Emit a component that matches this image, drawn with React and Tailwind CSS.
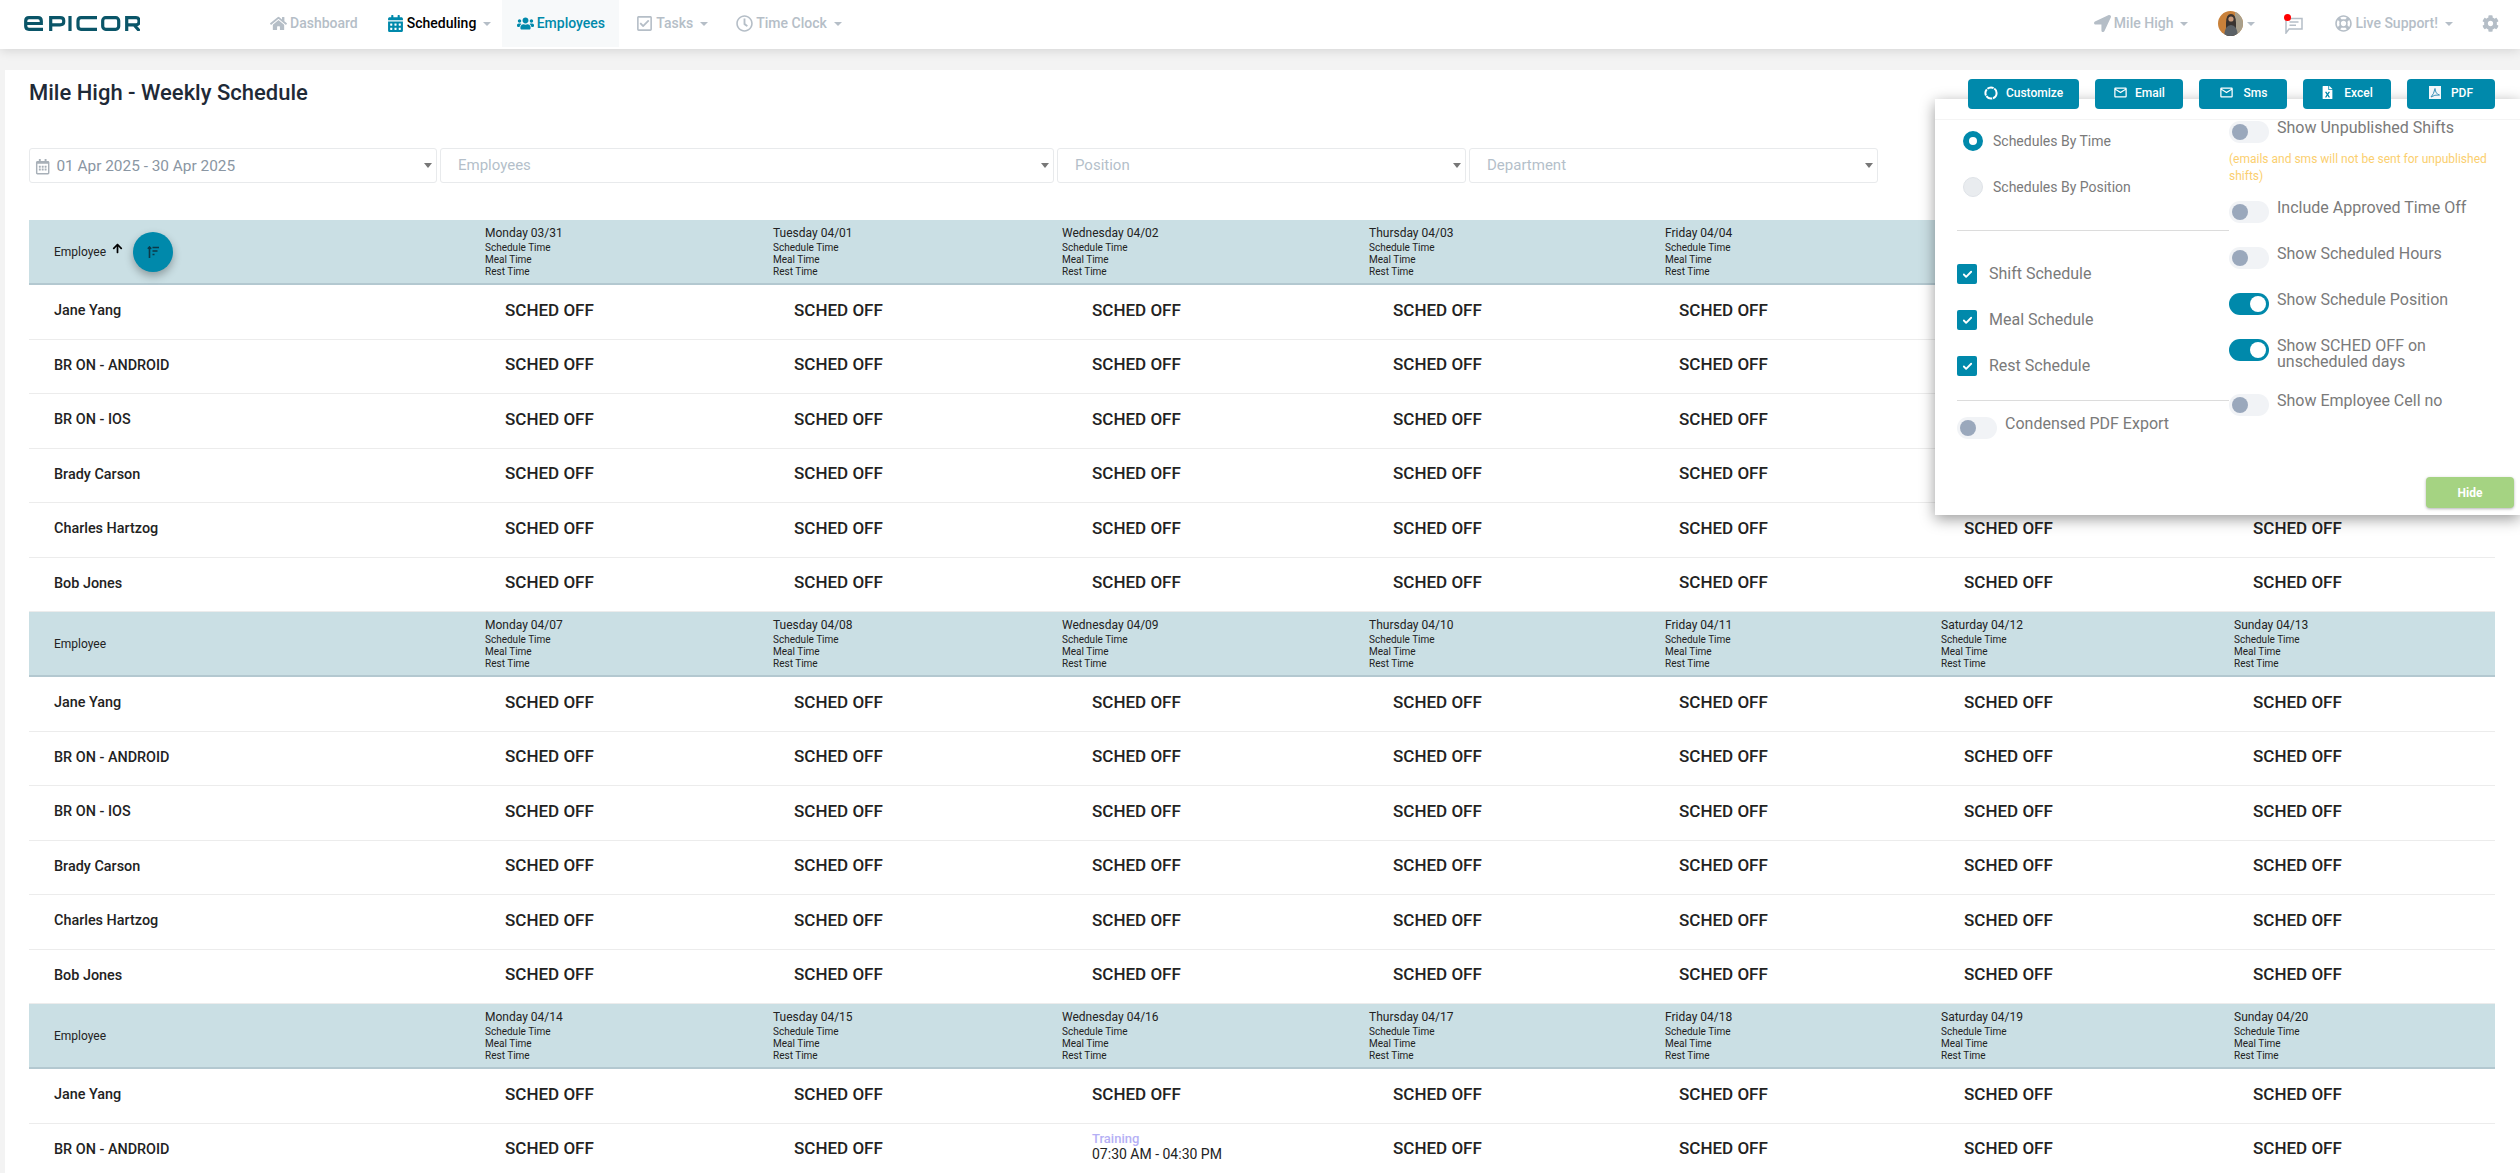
import { Check } from 'lucide-react';
import {
  FaArrowUp,
  FaCalendarAlt,
  FaCog,
  FaFileExcel,
  FaHome,
  FaLocationArrow,
  FaRegCalendarAlt,
  FaRegCheckSquare,
  FaRegClock,
  FaRegLifeRing,
  FaUsers,
} from 'react-icons/fa';
import { MdOutlineMail } from 'react-icons/md';

const employees = ['Jane Yang', 'BR ON - ANDROID', 'BR ON - IOS', 'Brady Carson', 'Charles Hartzog', 'Bob Jones'];

const weeks = [
  ['Monday 03/31', 'Tuesday 04/01', 'Wednesday 04/02', 'Thursday 04/03', 'Friday 04/04', 'Saturday 04/05', 'Sunday 04/06'],
  ['Monday 04/07', 'Tuesday 04/08', 'Wednesday 04/09', 'Thursday 04/10', 'Friday 04/11', 'Saturday 04/12', 'Sunday 04/13'],
  ['Monday 04/14', 'Tuesday 04/15', 'Wednesday 04/16', 'Thursday 04/17', 'Friday 04/18', 'Saturday 04/19', 'Sunday 04/20'],
];

const cellPad = ['pl-[20px]', 'pl-[21px]', 'pl-[30px]', 'pl-[24px]', 'pl-[14px]', 'pl-[23px]', 'pl-[19px]'];
const columns = 'grid grid-cols-[456px_288px_289px_307px_296px_276px_293px_1fr]';

const Caret = () => (
  <span className="ml-[4px] inline-block h-0 w-0 border-x-[4px] border-t-[4px] border-x-transparent border-t-[#b5bec7]" />
);

const Logo = () => (
  <svg width="116" height="15" viewBox="0 0 116 15" fill="none" stroke="#0a5568" strokeWidth="3.2" className="ml-[24px] shrink-0">
    <path d="M1.7 7.5H17.3V5Q17.3 1.7 14 1.7H5Q1.7 1.7 1.7 5V10Q1.7 13.3 5 13.3H19" />
    <path d="M26.7 15V1.7H36Q39.7 1.7 39.7 4.5V6Q39.7 8.8 36 8.8H26.7" />
    <path d="M46 0V15" />
    <path d="M73 1.7H57Q54 1.7 54 5V10Q54 13.3 57 13.3H73" />
    <rect x="78.7" y="1.7" width="16" height="11.6" rx="3" />
    <path d="M102.7 15V1.7H112Q115 1.7 115 4.5V6Q115 8.8 112 8.8H102.7M110 8.8L115.5 15" />
  </svg>
);

const Avatar = () => (
  <svg width="25" height="25" viewBox="0 0 25 25" className="shrink-0 rounded-full">
    <rect width="25" height="25" fill="#c9813a" />
    <rect x="17" width="8" height="25" fill="#a9a08c" />
    <path d="M8 25V12Q8 3 13 3T18 12V25Z" fill="#3a3430" />
    <path d="M6 25Q7 14 13 14T20 25Z" fill="#5b6166" />
    <circle cx="13" cy="8" r="2.6" fill="#c99a7a" />
  </svg>
);

const ChatIcon = () => (
  <svg width="18" height="17" viewBox="0 0 18 17" fill="none" stroke="#b5bec7" strokeWidth="1.5">
    <path d="M1 1.5H17V12H4L1 16Z" />
    <path d="M4.5 5H13.5M4.5 8.2H11" />
  </svg>
);

const CustomizeIcon = () => (
  <svg width="14" height="14" viewBox="0 0 14 14" fill="none" stroke="#fff" strokeWidth="2">
    <circle cx="7" cy="7" r="5.6" strokeDasharray="6.5 0.8" />
  </svg>
);

const PdfIcon = () => (
  <svg width="12" height="13" viewBox="0 0 12 13">
    <rect width="12" height="13" fill="#f4f7fa" />
    <path d="M2 11Q5 8 6 2.5Q6.5 8 10.5 9Q5.5 8.5 2 11Z" fill="none" stroke="#3c91b8" strokeWidth="1" />
  </svg>
);

const SortIcon = () => (
  <svg width="12" height="12" viewBox="0 0 12 12" fill="none" stroke="#0d3947" strokeWidth="1.6">
    <path d="M2.5 12V1M0.8 2.8L2.5 1L4.2 2.8" />
    <path d="M5.5 1.5H12M5.5 5H10.5M5.5 8.5H7.5" />
  </svg>
);

const NavItem = ({ icon: Icon, label, caret, color = 'text-[#b5bec7]', className = '', iconClass = '' }) => (
  <div className={`flex items-center gap-[3px] text-[14px] font-medium ${color} ${className}`}>
    <Icon className={`text-[17px] ${iconClass}`} />
    <span>{label}</span>
    {caret && <Caret />}
  </div>
);

const ActionButton = ({ icon, label, className = 'w-[88px] gap-[10px]' }) => (
  <button className={`flex h-[30px] items-center justify-center rounded-[4px] bg-[#0089ab] pb-[3px] text-[12px] font-medium text-white ${className}`}>
    {icon}
    <span>{label}</span>
  </button>
);

const FilterBox = ({ label, className, icon, value }) => (
  <div className={`flex h-[35px] items-center justify-between rounded-[3px] border border-[#e8eaec] pr-[4px] ${className}`}>
    {icon ? (
      <div className="flex items-center gap-[6px] pl-[5px] pt-[3px] text-[15.4px] text-[#8a96a3]">
        <FaRegCalendarAlt className="text-[#a8b0b8]" />
        <span>{value}</span>
      </div>
    ) : (
      <span className="pb-[1px] pl-[17px] text-[15px] text-[#b4bfca]">{label}</span>
    )}
    <span className="h-0 w-0 border-x-[4px] border-t-[5px] border-x-transparent border-t-[#777]" />
  </div>
);

const WeekHeader = ({ days, first }) => (
  <div className={`${columns} h-[65px] border-b-2 border-[#b3c8d0] bg-[#cadfe4] text-[#222]`}>
    <div className="flex items-center pl-[25px] text-[12px]">
      <span>Employee</span>
      {first && (
        <>
          <FaArrowUp className="mb-[6px] ml-[6px] text-[11px] text-black" />
          <div className="ml-[10px] flex h-[40px] w-[40px] items-center justify-center rounded-full bg-[#0089ab] shadow-[0_4px_8px_rgba(0,0,0,0.3)]">
            <SortIcon />
          </div>
        </>
      )}
    </div>
    {days.map((day) => (
      <div key={day} className="pt-[6px] text-[10px] leading-[12px]">
        <div className="mb-[1px] text-[12px] leading-[15px]">{day}</div>
        <div>Schedule Time</div>
        <div>Meal Time</div>
        <div>Rest Time</div>
      </div>
    ))}
  </div>
);

const EmployeeRow = ({ name, training }) => (
  <div className={`${columns} h-[54.5px] items-center border-b border-[#ececec] pb-[3px] text-[#222]`}>
    <div className="pl-[25px] pt-[2px] text-[14.4px] font-medium">{name}</div>
    {cellPad.map((pad, i) => (
      <div key={pad} className={pad}>
        {training && i === 2 ? (
          <div className="pb-[5px]">
            <div className="text-[13px] font-medium leading-[15px] text-[#b5b0f5]">Training</div>
            <div className="text-[14px] leading-[16px]">07:30 AM - 04:30 PM</div>
          </div>
        ) : (
          <span className="text-[17px] font-medium">SCHED OFF</span>
        )}
      </div>
    ))}
  </div>
);

const Toggle = ({ on }) => (
  <div className={`flex h-[22px] w-[40px] shrink-0 items-center rounded-full px-[3px] ${on ? 'justify-end bg-[#0089ab]' : 'bg-[#f1f3f6]'}`}>
    <div className={`h-[16px] w-[16px] rounded-full ${on ? 'bg-white' : 'bg-[#9aa8bc]'}`} />
  </div>
);

const ToggleRow = ({ label, on, className = 'mt-[24px]' }) => (
  <div className={`flex items-start gap-[8px] ${className}`}>
    <Toggle on={on} />
    <span className="-mt-[1px] w-[190px] text-[16px] leading-[16px] text-[#7a7a7a]">{label}</span>
  </div>
);

const CheckRow = ({ label, className = 'mt-[26px]' }) => (
  <div className={`flex items-center gap-[12px] text-[16px] leading-[20px] text-[#7a7a7a] ${className}`}>
    <div className="flex h-[20px] w-[20px] items-center justify-center rounded-[2px] bg-[#0089ab]">
      <Check size={11} strokeWidth={4} className="text-white" />
    </div>
    <span>{label}</span>
  </div>
);

const SettingsPanel = () => (
  <div className="absolute left-[1930px] top-[29px] flex h-[416px] w-[585px] flex-col bg-white shadow-[0_4px_14px_rgba(0,0,0,0.4)]">
    <div className="h-[21px] shrink-0 border-b border-[#f4f4f4]" />
    <div className="flex pl-[22px]">
      <div className="w-[272px]">
        <div className="ml-[6px] mt-[11px] flex items-center gap-[10px] text-[14px] leading-[20px] text-[#7a7a7a]">
          <div className="h-[20px] w-[20px] rounded-full border-[6px] border-[#0089ab] bg-white" />
          <span>Schedules By Time</span>
        </div>
        <div className="ml-[6px] mt-[26px] flex items-center gap-[10px] text-[14px] leading-[20px] text-[#7a7a7a]">
          <div className="h-[20px] w-[20px] rounded-full border border-[#dfe3e8] bg-[#e9ecef]" />
          <span>Schedules By Position</span>
        </div>
        <div className="mt-[33px] h-px bg-[#dcdcdc]" />
        <CheckRow label="Shift Schedule" className="mt-[33px]" />
        <CheckRow label="Meal Schedule" />
        <CheckRow label="Rest Schedule" />
        <div className="mt-[24px] h-px bg-[#dcdcdc]" />
        <ToggleRow label="Condensed PDF Export" className="mt-[16px]" />
      </div>
      <div className="w-[270px]">
        <ToggleRow label="Show Unpublished Shifts" className="mt-[1px]" />
        <p className="mt-[8px] text-[12px] leading-[17px] text-[#fbcf6f]">
          (emails and sms will not be sent for unpublished shifts)
        </p>
        <ToggleRow label="Include Approved Time Off" className="mt-[16px]" />
        <ToggleRow label="Show Scheduled Hours" />
        <ToggleRow label="Show Schedule Position" on />
        <ToggleRow label="Show SCHED OFF on unscheduled days" on />
        <ToggleRow label="Show Employee Cell no" />
      </div>
    </div>
    <div className="mt-auto flex justify-end pb-[7px] pr-[6px]">
      <button className="h-[31px] w-[88px] rounded-[4px] bg-[#a5d382] text-[12px] font-bold text-white shadow-[0_1px_3px_rgba(0,0,0,0.3)]">
        Hide
      </button>
    </div>
  </div>
);

export default function App() {
  return (
    <div className="h-[1173px] overflow-hidden bg-[#f3f3f3] font-['Roboto',sans-serif]">
      <header className="flex h-[49px] items-start bg-white shadow-[0_2px_10px_rgba(0,0,0,0.12)]">
        <div className="mt-[16px] flex">
          <Logo />
        </div>
        <nav className="ml-[130px] flex h-[47px] items-center">
          <NavItem icon={FaHome} label="Dashboard" />
          <NavItem icon={FaCalendarAlt} label="Scheduling" caret color="text-black" className="ml-[29px]" iconClass="text-[#0089ab]" />
          <div className="ml-[11px] flex h-[47px] w-[117px] items-center justify-center bg-[#f7f9fa]">
            <NavItem icon={FaUsers} label="Employees" color="text-[#0089ab]" />
          </div>
          <NavItem icon={FaRegCheckSquare} label="Tasks" caret className="ml-[17px]" />
          <NavItem icon={FaRegClock} label="Time Clock" caret className="ml-[28px]" />
        </nav>
        <div className="ml-auto flex h-[47px] items-center pr-[21px]">
          <NavItem icon={FaLocationArrow} label="Mile High" caret />
          <div className="ml-[30px] flex items-center">
            <Avatar />
            <Caret />
          </div>
          <div className="relative ml-[30px] mt-[3px]">
            <ChatIcon />
            <span className="absolute -left-[1px] -top-[3px] h-[7px] w-[7px] rounded-full bg-[#f00]" />
          </div>
          <NavItem icon={FaRegLifeRing} label="Live Support!" caret className="ml-[32px]" />
          <FaCog className="ml-[29px] text-[17px] text-[#b5bec7]" />
        </div>
      </header>

      <main className="relative ml-[5px] mt-[21px] h-[1103px] bg-white pl-[24px] pr-[25px] pt-[9px]">
        <div className="flex items-start justify-between">
          <h1 className="mt-[1px] text-[22px] font-medium leading-[26px] text-[#1f2a37]">Mile High - Weekly Schedule</h1>
          <div className="relative z-10 flex gap-[16px]">
            <ActionButton icon={<CustomizeIcon />} label="Customize" className="w-[111px] gap-[8px]" />
            <ActionButton icon={<MdOutlineMail className="text-[15px]" />} label="Email" className="w-[88px] gap-[7px]" />
            <ActionButton icon={<MdOutlineMail className="text-[15px]" />} label="Sms" />
            <ActionButton icon={<FaFileExcel className="text-[13px]" />} label="Excel" />
            <ActionButton icon={<PdfIcon />} label="PDF" />
          </div>
        </div>

        <div className="mt-[39px] flex gap-[3px]">
          <FilterBox icon value="01 Apr 2025 - 30 Apr 2025" className="w-[408px]" />
          <FilterBox label="Employees" className="w-[614px]" />
          <FilterBox label="Position" className="w-[409px]" />
          <FilterBox label="Department" className="w-[409px]" />
        </div>

        <div className="mt-[37px]">
          {weeks.map((days, w) => (
            <section key={days[0]}>
              <WeekHeader days={days} first={w === 0} />
              {(w === 2 ? employees.slice(0, 2) : employees).map((name) => (
                <EmployeeRow key={name} name={name} training={w === 2 && name === 'BR ON - ANDROID'} />
              ))}
            </section>
          ))}
        </div>

        <SettingsPanel />
      </main>
    </div>
  );
}
